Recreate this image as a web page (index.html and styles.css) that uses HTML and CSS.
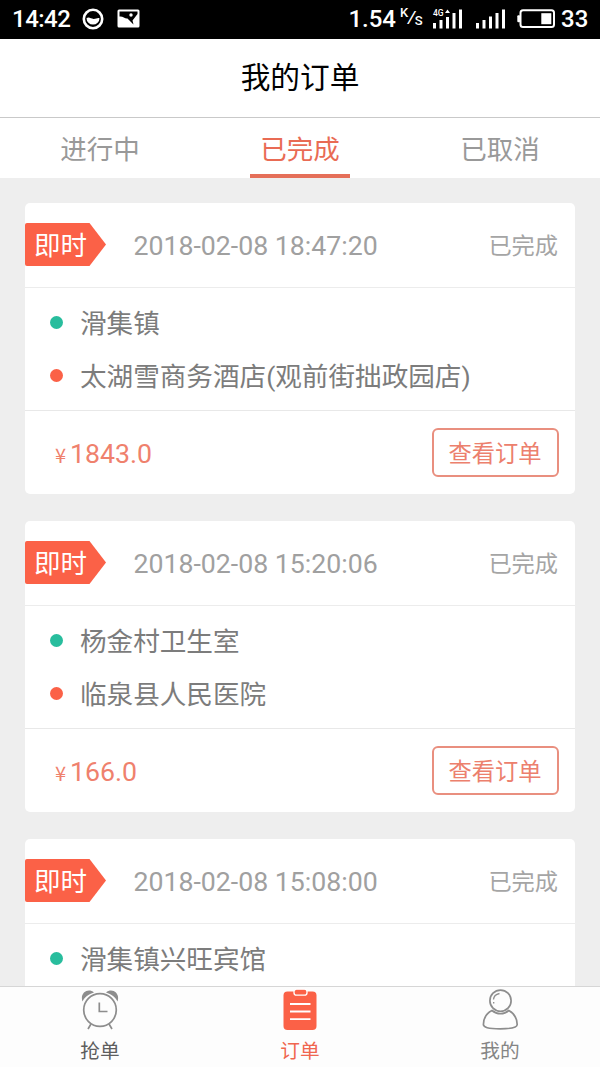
FILE: index.html
```html
<!DOCTYPE html>
<html lang="zh-CN">
<head>
<meta charset="utf-8">
<title>我的订单</title>
<link rel="stylesheet" href="styles.css">
</head>
<body>
<div class="app">
  <header class="status-bar">
    <span class="clock">14:42</span>
    <svg class="app-icon" width="22" height="22" viewBox="0 0 22 22"><circle cx="11" cy="11" r="9.2" fill="none" stroke="#fff" stroke-width="2.6"/><path d="M4.5 10.2C7 8.5 9 10.8 11.5 10.9C14 11 15.5 9.5 17.5 10.2A6.5 6.3 0 0 1 4.5 10.2Z" fill="#fff"/></svg>
    <svg class="photo-icon" width="23" height="19" viewBox="0 0 23 19"><rect x="0.5" y="0.5" width="22" height="18" rx="1.5" fill="#fff"/><path d="M2.5 2.5H20.5V5L15.5 11.5L16.5 15.5L10.5 9.5C8 10 6 7 2.5 7.5Z" fill="#000"/><circle cx="14" cy="6" r="1.7" fill="#fff"/></svg>
    <span class="speed">1.54</span>
    <span class="unit"><span class="unit-k">K</span><span class="unit-slash">/</span><span class="unit-s">S</span></span>
    <svg class="signal-4g" width="32" height="20" viewBox="0 0 32 20" fill="#fff"><text x="1" y="7" class="network">4G</text><rect x="1" y="14" width="3" height="5.5"/><rect x="7.5" y="11" width="3" height="8.5"/><path d="M14 8h3v11.5h-3zM13 4l2.5-3.5L18 4z"/><rect x="20.5" y="4" width="3" height="15.5"/><rect x="27" y="0.5" width="3" height="19"/></svg>
    <svg class="signal" width="32" height="20" viewBox="0 0 32 20" fill="#fff"><rect x="1" y="14" width="3" height="5.5"/><rect x="7.5" y="11" width="3" height="8.5"/><rect x="14" y="7.5" width="3" height="12"/><rect x="20.5" y="4" width="3" height="15.5"/><rect x="27" y="0.5" width="3" height="19"/></svg>
    <svg class="battery" width="39" height="20" viewBox="0 0 39 20"><rect x="3.5" y="1.3" width="33.5" height="16.8" rx="2.5" fill="none" stroke="#fff" stroke-width="2"/><rect x="0.3" y="6.2" width="2.8" height="7" rx="1" fill="#fff"/><rect x="24.3" y="4.2" width="10" height="11" fill="#fff"/></svg>
    <span class="level">33</span>
  </header>

  <h1 class="title">我的订单</h1>

  <nav class="tabs">
    <a class="tab">进行中</a>
    <a class="tab tab-active">已完成</a>
    <a class="tab">已取消</a>
  </nav>

  <main class="orders">
    <article class="card">
      <div class="card-head"><span class="tag">即时</span><time class="date">2018-02-08 18:47:20</time><span class="state">已完成</span></div>
      <div class="route">
        <p class="stop"><i class="dot dot-from"></i><span class="place">滑集镇</span></p>
        <p class="stop"><i class="dot dot-to"></i><span class="place">太湖雪商务酒店(观前街拙政园店)</span></p>
      </div>
      <div class="card-foot"><span class="price"><span class="yen">¥</span>1843.0</span><button class="view">查看订单</button></div>
    </article>
    <article class="card">
      <div class="card-head"><span class="tag">即时</span><time class="date">2018-02-08 15:20:06</time><span class="state">已完成</span></div>
      <div class="route">
        <p class="stop"><i class="dot dot-from"></i><span class="place">杨金村卫生室</span></p>
        <p class="stop"><i class="dot dot-to"></i><span class="place">临泉县人民医院</span></p>
      </div>
      <div class="card-foot"><span class="price"><span class="yen">¥</span>166.0</span><button class="view">查看订单</button></div>
    </article>
    <article class="card">
      <div class="card-head"><span class="tag">即时</span><time class="date">2018-02-08 15:08:00</time><span class="state">已完成</span></div>
      <div class="route">
        <p class="stop"><i class="dot dot-from"></i><span class="place">滑集镇兴旺宾馆</span></p>
      </div>
    </article>
  </main>

  <footer class="bottom-nav">
    <a class="nav-item nav-grab">
      <svg width="40" height="44" viewBox="0 0 40 44"><g fill="#8d8d8d"><path d="M2.500 13.500C-0.500 5 8 -0.500 14 4.500C8.500 6 4.500 9.500 2.500 13.500Z"/><path d="M37.500 13.500C40.500 5 32 -0.500 26 4.500C31.500 6 35.500 9.500 37.500 13.500Z"/></g><g fill="none" stroke="#8d8d8d" stroke-width="1.700"><circle cx="20" cy="22" r="16.300"/><path d="M19.300 14.500V23.500H27.500M11 36L8 41M29 36L32 41"/></g></svg>
      <span>抢单</span>
    </a>
    <a class="nav-item nav-orders">
      <svg width="40" height="44" viewBox="0 0 40 44"><rect x="3.500" y="3.500" width="33" height="38.500" rx="4" fill="#fb6147"/><rect x="14" y="1.200" width="13" height="6" rx="2.500" fill="#fb6147" stroke="#fff" stroke-width="1.300"/><path d="M10 16H30.500M10 23.500H30.500M10 31.200H30.500" stroke="#fff" stroke-width="1.800"/></svg>
      <span>订单</span>
    </a>
    <a class="nav-item nav-mine">
      <svg width="40" height="44" viewBox="0 0 40 44" fill="none" stroke="#8d8d8d" stroke-width="1.700"><circle cx="20.500" cy="12.700" r="10.600"/><path d="M13.500 11.500C13.700 8.500 16 6.200 19.500 5.500M13.700 14v1.500" stroke-width="1.300"/><path d="M12 22.500C6 25.500 3.500 31 3.400 36.500C3.300 39.300 8 40.800 20.300 40.800C32.500 40.800 37.200 39.300 37.200 36.500C37 31 34.500 25.500 28.800 22.500C24 26.800 17 26.800 12 22.500Z"/></svg>
      <span>我的</span>
    </a>
  </footer>
</div>
</body>
</html>
```
FILE: styles.css
```css
* { box-sizing: border-box; }

body {
  margin: 0;
  background: #eee;
  font-family: Roboto, "Noto Sans CJK SC", sans-serif;
}

.app {
  display: flex;
  flex-direction: column;
  width: 600px;
  height: 1067px;
  overflow: hidden;
}

.status-bar {
  display: flex;
  align-items: center;
  flex: none;
  height: 39px;
  padding: 0 12px 2px;
  background: #000;
  color: #fff;
  font-size: 24px;
  font-weight: 500;
  line-height: 36px;
}

.clock { width: 59px; letter-spacing: -0.5px; }
.app-icon { margin: 0 0 0 11px; }
.photo-icon { margin-left: 13px; }
.speed { margin-left: auto; }
.unit { display: flex; width: 23px; margin-left: 4px; font-size: 13px; line-height: 18px; }
.unit-k { margin-top: -4px; }
.unit-slash { font-size: 17px; transform: skewX(-12deg); }
.unit-s { margin-top: 4px; }
.signal-4g { margin-left: 9px; }
.network { font-size: 8.5px; font-weight: 500; }
.signal { margin-left: 11px; }
.battery { margin-left: 10px; }
.level { width: 27px; margin-left: 5px; }

.title {
  flex: none;
  height: 79px;
  margin: 0;
  border-bottom: 1px solid #c9c9c9;
  background: #fff;
  color: #000;
  font-size: 29.7px;
  font-weight: 400;
  line-height: 78px;
  text-align: center;
}

.tabs {
  display: flex;
  flex: none;
  justify-content: space-between;
  height: 60px;
  padding: 0 50px;
  background: #fff;
}

.tab {
  width: 100px;
  height: 60px;
  color: #999;
  font-size: 26.5px;
  line-height: 63px;
  text-align: center;
}
.tab-active { border-bottom: 4px solid #e56f59; color: #e96b54; }

.orders {
  display: flex;
  flex: 1;
  flex-direction: column;
  gap: 27px;
  min-height: 0;
  padding: 25px 25px 0;
  overflow: hidden;
}

.card {
  flex: none;
  border-radius: 5px;
  background: #fff;
}

.card-head {
  display: flex;
  align-items: center;
  height: 85px;
  padding-right: 17px;
  border-bottom: 1px solid #ececec;
}

.tag {
  width: 81px;
  height: 43px;
  margin-bottom: 1px;
  padding-left: 9px;
  border-radius: 2px;
  background: #fb6147;
  clip-path: polygon(0 0, 64.5px 0, 100% 50%, 64.5px 100%, 0 100%);
  color: #fff;
  font-size: 26.5px;
  line-height: 45px;
}

.date {
  margin-left: 27.5px;
  padding-top: 2px;
  color: #a0a0a0;
  font-size: 26.7px;
}

.state {
  margin: 0 0 3px auto;
  color: #a5a5a5;
  font-size: 23.2px;
}

.route {
  height: 123px;
  padding: 8px 25px;
  border-bottom: 1px solid #e8e8e8;
}

.stop {
  display: flex;
  align-items: center;
  height: 53px;
  margin: 0;
  color: #7c7c7c;
  font-size: 26.6px;
}

.place { margin-bottom: 3px; }

.dot {
  width: 13px;
  height: 13px;
  margin-right: 17px;
  border-radius: 50%;
}
.dot-from { background: #28bd9d; }
.dot-to { background: #fb6147; }

.card-foot {
  display: flex;
  align-items: center;
  justify-content: space-between;
  height: 83px;
  padding: 0 16px 0 25px;
}

.price {
  padding-top: 2px;
  color: #ef816d;
  font-size: 26.7px;
}

.yen {
  display: inline-block;
  width: 20px;
  padding-left: 1px;
  font-family: "Noto Sans CJK SC", sans-serif;
  font-size: 20px;
  text-align: center;
}

.view {
  width: 127px;
  height: 49px;
  padding: 0 1px 2px 0;
  border: 2px solid #e98f7f;
  border-radius: 6px;
  background: #fff;
  color: #ec806d;
  font-family: inherit;
  font-size: 23.3px;
}

.bottom-nav {
  display: flex;
  flex: none;
  justify-content: space-between;
  height: 81px;
  padding: 1px 70px 0;
  border-top: 1px solid #d6d6d6;
  background: #fdfdfd;
}

.nav-item {
  display: flex;
  flex-direction: column;
  align-items: center;
  width: 60px;
  color: #858585;
  font-size: 19.7px;
  line-height: 39px;
}
.nav-item svg { flex: none; }
.nav-grab { color: #5e5e5e; }
.nav-orders { color: #f0664f; }
```
